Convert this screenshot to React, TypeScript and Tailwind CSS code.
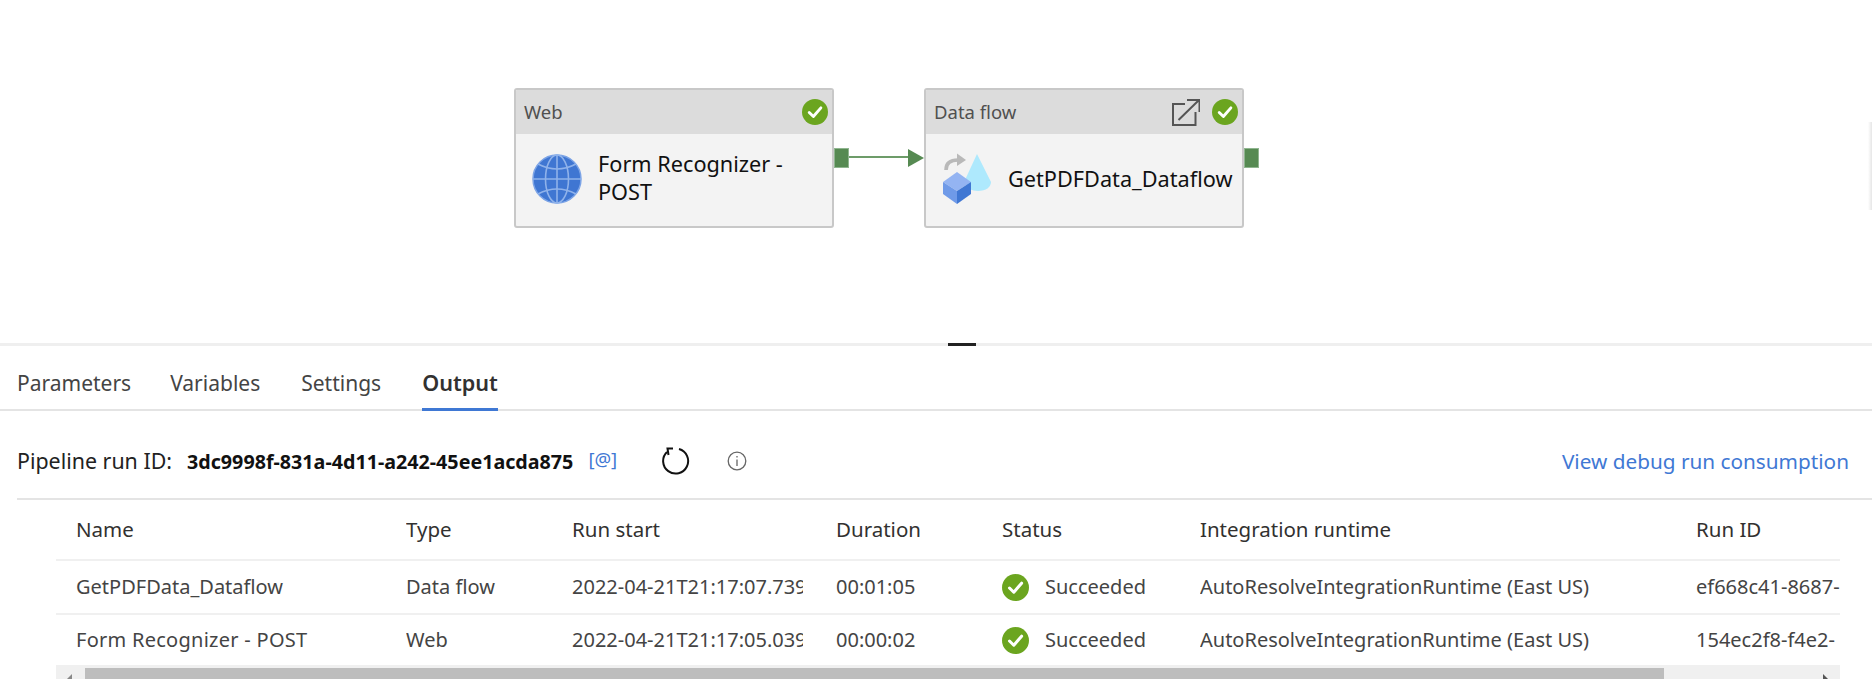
import React from "react";

const Check = ({ size = 27 }: { size?: number }) => (
  <svg width={size} height={size} viewBox="0 0 27 27" className="shrink-0">
    <circle cx="13.5" cy="13.5" r="13.5" fill="#6ba51f" />
    <path d="M7.5 14 L11.8 18.2 L19.6 9.2" fill="none" stroke="#fff" strokeWidth="3" strokeLinecap="round" strokeLinejoin="round" />
  </svg>
);

const Globe = () => (
  <svg width="50" height="50" viewBox="0 0 50 50" className="shrink-0">
    <circle cx="25" cy="25" r="24" fill="#3f76d2" stroke="#7ba3e6" strokeWidth="1.5" />
    <g fill="none" stroke="#8fb2ea" strokeWidth="1.6">
      <ellipse cx="25" cy="25" rx="11.5" ry="24" />
      <path d="M25 1V49M1 25H49" />
      <path d="M6 10Q25 20 44 10M6 40Q25 30 44 40" />
    </g>
  </svg>
);

const DataFlowIcon = () => (
  <svg width="60" height="60" viewBox="0 0 60 60" className="mt-[2px] shrink-0">
    <path d="M37 4 L25 30 C25 38 32 41 38 41 C46 41 51 37 51 32 Z" fill="#aee9fd" />
    <path d="M6 20 C6 13 10 10 18 10" fill="none" stroke="#b9b9b9" strokeWidth="3.6" />
    <path d="M17 3.5 L26 10 L17 16 Z" fill="#b9b9b9" />
    <path d="M17 22 L31 32 L17 41 L3 32 Z" fill="#94b4f2" />
    <path d="M3 32 L17 41 V54 L3 44 Z" fill="#6f9ae8" />
    <path d="M31 32 L17 41 V54 L31 44 Z" fill="#4077d3" />
  </svg>
);

const OpenIcon = () => (
  <svg width="28" height="27" viewBox="0 0 28 27" className="shrink-0">
    <g fill="none" stroke="#555" strokeWidth="2">
      <path d="M13 5H1V26H23.5V13" />
      <path d="M6.5 21L27 1M15 1H27.5V13" />
    </g>
  </svg>
);

function Node({ left, type, title, icon, extra, pad }: { left: string; type: string; title: React.ReactNode; icon: React.ReactNode; extra?: React.ReactNode; pad: string }) {
  return (
    <div className={`absolute top-[88px] ${left} flex h-[140px] w-[320px] flex-col overflow-hidden rounded-[3px] border-2 border-[#c8c8c8] bg-[#f3f3f3] pb-[2px]`}>
      <div className="flex h-[44px] items-center justify-between bg-[#dcdcdc] pl-[8px] pr-[4px] text-[18.5px] text-[#505050]">
        <span>{type}</span>
        <div className="flex items-center gap-[12px]">
          {extra}
          <Check size={26} />
        </div>
      </div>
      <div className={`flex flex-1 items-center ${pad} text-[21.7px] leading-[28px] text-[#111]`}>
        {icon}
        {title}
      </div>
    </div>
  );
}

const columns = ["w-[330px]", "w-[166px]", "w-[264px]", "w-[166px]", "w-[198px]", "w-[496px]", "flex-1"];

const rows = [
  ["GetPDFData_Dataflow", "Data flow", "2022-04-21T21:17:07.739", "00:01:05", "AutoResolveIntegrationRuntime (East US)", "ef668c41-8687-"],
  ["Form Recognizer - POST", "Web", "2022-04-21T21:17:05.039", "00:00:02", "AutoResolveIntegrationRuntime (East US)", "154ec2f8-f4e2-"],
];

const Cell = ({ w, children, clip }: { w: string; children: React.ReactNode; clip?: string }) => (
  <div className={`${w} min-w-0 overflow-hidden whitespace-nowrap ${clip ?? ""}`}>{children}</div>
);

export default function App() {
  return (
    <div className="flex h-[689px] w-[1872px] flex-col overflow-hidden bg-white text-[#323130] font-['Noto_Sans','Open_Sans',sans-serif]">
      {/* Canvas */}
      <div className="relative h-[343px] shrink-0">
        <Node
          left="left-[514px]"
          type="Web"
          pad="pl-[16px]"
          icon={<Globe />}
          title={<div className="-mt-[2px] ml-[16px] w-[226px]">Form Recognizer - POST</div>}
        />
        <Node
          left="left-[924px]"
          type="Data flow"
          pad="pl-[14px]"
          extra={<OpenIcon />}
          icon={<DataFlowIcon />}
          title={<div className="ml-[8px] whitespace-nowrap">GetPDFData_Dataflow</div>}
        />
        <div className="absolute left-[834px] top-[148px] h-[20px] w-[15px] border border-[#8fb58f] bg-[#568a52]" />
        <div className="absolute left-[1244px] top-[148px] h-[20px] w-[15px] border border-[#8fb58f] bg-[#568a52]" />
        <div className="absolute left-[849px] top-[156px] h-[2px] w-[62px] bg-[#6d9c69]" />
        <svg className="absolute left-[908px] top-[149px]" width="16" height="18" viewBox="0 0 16 18">
          <path d="M0 0L16 9L0 18Z" fill="#568a52" />
        </svg>
        <div className="absolute right-0 top-[122px] h-[88px] w-[4px] bg-gradient-to-r from-white to-[#e6e6e6]" />
      </div>

      {/* Splitter */}
      <div className="relative h-[3px] shrink-0 bg-[#efefef]">
        <div className="absolute left-[948px] top-0 h-[3px] w-[28px] bg-[#222]" />
      </div>

      {/* Tabs */}
      <div className="flex h-[65px] shrink-0 items-end border-b-2 border-[#e4e4e4] pl-[17px] text-[21px]">
        <div className="flex h-[50px] items-center text-[#444]">Parameters</div>
        <div className="ml-[39px] flex h-[50px] items-center text-[#444]">Variables</div>
        <div className="ml-[41px] flex h-[50px] items-center text-[#444]">Settings</div>
        <div className="-mb-[2px] ml-[41px] flex h-[52px] items-center border-b-[3px] border-[#3f78d4] text-[21.6px] font-semibold text-[#323130]">Output</div>
      </div>

      {/* Pipeline run */}
      <div className="ml-[17px] flex h-[89px] shrink-0 items-center border-b-2 border-[#e4e4e4] pr-[23px] pt-[14px]">
        <span className="text-[21.4px] text-[#222]">Pipeline run ID:</span>
        <span className="ml-[15px] text-[19.7px] font-bold text-[#111]">3dc9998f-831a-4d11-a242-45ee1acda875</span>
        <span className="ml-[15px] -mt-[6px] text-[18.5px] text-[#3f78d4]">[@]</span>
        <svg className="ml-[45px] -mt-[2px]" width="28" height="28" viewBox="0 0 28 28">
          <path d="M17 2 A12.5 12.5 0 1 1 5 5" fill="none" stroke="#111" strokeWidth="2" />
          <path d="M11 1.5H5.5L6.5 8" fill="none" stroke="#111" strokeWidth="2" />
        </svg>
        <svg className="ml-[37px] -mt-[2px]" width="20" height="20" viewBox="0 0 20 20">
          <circle cx="10" cy="10" r="8.8" fill="none" stroke="#666" strokeWidth="1.3" />
          <path d="M10 8.5V15M10 5V6.5" stroke="#666" strokeWidth="1.3" />
        </svg>
        <a className="ml-auto text-[20.75px] text-[#3f78d4]">View debug run consumption</a>
      </div>

      {/* Table */}
      <div className="ml-[56px] mr-[32px] flex flex-col text-[20px] text-[#444]">
        <div className="flex h-[61px] items-center border-b-2 border-[#f0f0f0] pl-[20px] text-[20.5px] text-[#323130]">
          {["Name", "Type", "Run start", "Duration", "Status", "Integration runtime", "Run ID"].map((h, i) => (
            <Cell key={h} w={columns[i]}>{h}</Cell>
          ))}
        </div>
        {rows.map((r, i) => (
          <div key={r[0]} className={`flex items-center pl-[20px] ${i === 0 ? "h-[54px] border-b-2 border-[#f0f0f0]" : "h-[50px]"}`}>
            <Cell w={columns[0]}><span className={i === 1 ? "tracking-[0.27px]" : ""}>{r[0]}</span></Cell>
            <Cell w={columns[1]}>{r[1]}</Cell>
            <Cell w={columns[2]} clip="pr-[33px]"><div className="overflow-hidden">{r[2]}</div></Cell>
            <Cell w={columns[3]}>{r[3]}</Cell>
            <div className={`${columns[4]} flex items-center gap-[16px]`}>
              <Check />
              <span>Succeeded</span>
            </div>
            <Cell w={columns[5]}>{r[4]}</Cell>
            <Cell w={columns[6]}>{r[5]}</Cell>
          </div>
        ))}
        {/* Scrollbar */}
        <div className="flex h-[14px] items-stretch bg-[#f0f0f0] pt-[3px]">
          <div className="relative w-[29px]">
            <div className="absolute bottom-0 left-[11px] h-0 w-0 border-b-[5px] border-l-[5px] border-b-[#888] border-l-transparent" />
          </div>
          <div className="w-[1579px] bg-[#bdbdbd]" />
          <div className="relative flex-1">
            <div className="absolute bottom-0 right-[12px] h-0 w-0 border-b-[5px] border-r-[5px] border-b-[#555] border-r-transparent" />
          </div>
        </div>
      </div>
    </div>
  );
}
